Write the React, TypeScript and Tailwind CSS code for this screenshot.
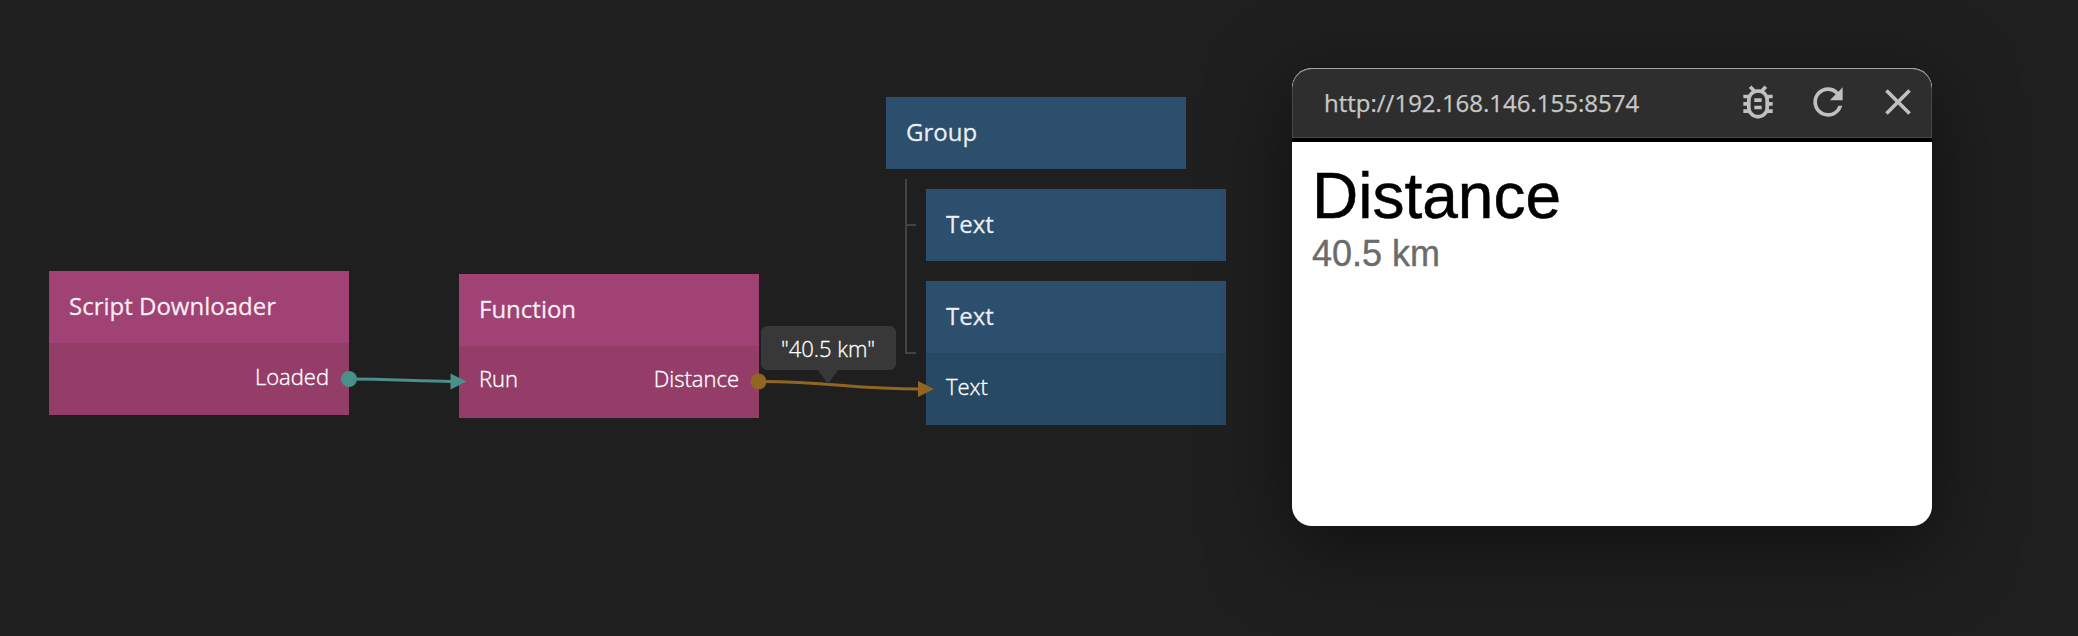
import type { ReactNode } from "react";
import { MdOutlineBugReport, MdRefresh, MdClose } from "react-icons/md";

type NodeProps = {
  title: string;
  place: string;
  headerClass: string;
  bodyClass?: string;
  input?: string;
  output?: string;
};

function GraphNode({ title, place, headerClass, bodyClass, input, output }: NodeProps) {
  return (
    <div className={`absolute w-[300px] ${place}`}>
      <div className={`flex h-[72px] items-center px-5 text-2xl font-normal text-white/90 ${headerClass}`}>
        <span className="-mt-0.5 [-webkit-text-stroke:0.3px_rgba(255,255,255,0.7)]">{title}</span>
      </div>
      {bodyClass && (
        <div className={`flex h-[72px] items-start justify-between px-5 text-[22px] font-light leading-[32px] text-white [-webkit-text-stroke:0.35px_white] ${bodyClass}`}>
          <span>{input}</span>
          <span>{output}</span>
        </div>
      )}
    </div>
  );
}

function Wires() {
  return (
    <svg className="absolute inset-0" width="1260" height="636" viewBox="0 0 1260 636" fill="none">
      <path d="M349 379 C390 379 420 381.5 452 381.5" stroke="#4a8f8c" strokeWidth="3" />
      <circle cx="349" cy="379" r="8" fill="#4a8f8c" />
      <path d="M450.500 373.500 L466.500 381.500 L450.500 389.500 Z" fill="#4a8f8c" />
      <path d="M758.500 381.500 C830 381.500 850 389 920 389" stroke="#916522" strokeWidth="3" />
      <circle cx="758.500" cy="381.500" r="8" fill="#916522" />
      <path d="M918 381 L934 389 L918 397 Z" fill="#916522" />
      <path d="M906 179 V353 H916 M906 225 H916" stroke="#444444" strokeWidth="2" />
    </svg>
  );
}

function ToolButton({ label, children }: { label: string; children: ReactNode }) {
  return (
    <button aria-label={label} className="flex size-[70px] items-center justify-center pb-0.5">
      {children}
    </button>
  );
}

function PreviewWindow() {
  return (
    <section className="absolute left-[1292px] top-[68px] flex h-[458px] w-[640px] flex-col overflow-hidden rounded-[20px] bg-white shadow-[0_20px_80px_rgba(0,0,0,0.5)]">
      <header className="flex h-[74px] shrink-0 items-center justify-between rounded-t-[20px] border-b-4 border-black bg-[#2e2e2e] pl-8 text-2xl text-[#c8c8c8] shadow-[inset_0_1px_0_rgba(255,255,255,0.5),inset_0_0_0_1px_rgba(255,255,255,0.12)]">
        <span className="[-webkit-text-stroke:0.25px_#c8c8c8]">http://192.168.146.155:8574</span>
        <div className="-mr-px flex text-[#c0c0c0]">
          <ToolButton label="Debug"><MdOutlineBugReport size={44} /></ToolButton>
          <ToolButton label="Refresh"><MdRefresh size={44} /></ToolButton>
          <ToolButton label="Close"><MdClose size={44} /></ToolButton>
        </div>
      </header>
      <main className="flex flex-col px-5 pt-[17px] font-['Liberation_Sans',Arial,sans-serif]">
        <h1 className="text-[64px] leading-[74px] text-black [-webkit-text-stroke:0.5px_black]">Distance</h1>
        <p className="pt-px text-[36px] leading-[40px] text-[#6b6b6b] [-webkit-text-stroke:0.4px_#6b6b6b]">40.5 km</p>
      </main>
    </section>
  );
}

export default function App() {
  return (
    <div className="relative h-[636px] w-[2078px] overflow-hidden bg-[#1f1f1f] font-['Open_Sans',sans-serif]">
      <GraphNode title="Script Downloader" output="Loaded" place="left-[49px] top-[271px]" headerClass="bg-[#a04374]" bodyClass="bg-[#943d69] pt-[17px]" />
      <GraphNode title="Function" input="Run" output="Distance" place="left-[459px] top-[274px]" headerClass="bg-[#a04374]" bodyClass="bg-[#943d69] pt-4" />
      <GraphNode title="Group" place="left-[886px] top-[97px]" headerClass="bg-[#2c4f6d]" />
      <GraphNode title="Text" place="left-[926px] top-[189px]" headerClass="bg-[#2c4f6d]" />
      <GraphNode title="Text" input="Text" place="left-[926px] top-[281px]" headerClass="bg-[#2c4f6d]" bodyClass="bg-[#274963] pt-[17px]" />
      <Wires />
      <div className="absolute left-[761px] top-[326px] flex h-11 w-[135px] items-center justify-center rounded-md bg-[#383838] pr-px text-[22px] font-light text-white [-webkit-text-stroke:0.3px_white]">
        "40.5 km"
        <svg className="absolute left-[57px] top-11" width="20" height="14" viewBox="0 0 20 14">
          <path d="M0 0 H20 L10 14 Z" fill="#383838" />
        </svg>
      </div>
      <PreviewWindow />
    </div>
  );
}
